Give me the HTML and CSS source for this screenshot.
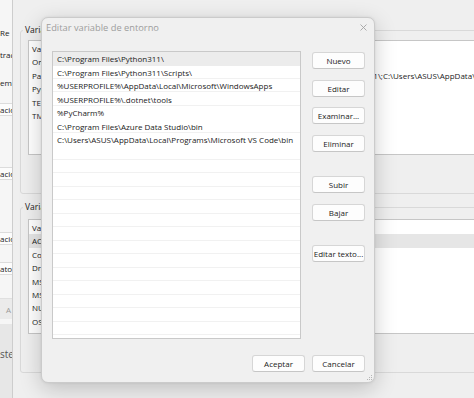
FILE: index.html
```html
<!DOCTYPE html>
<html lang="es">
<head>
  <meta charset="UTF-8" />
  <title>Editar variable de entorno</title>
  <link rel="stylesheet" href="styles.css">
</head>
<body>
  <div class="desktop">
    <!-- ventana de propiedades del sistema (casi tapada) -->
    <div class="win-sys">
      <p class="sys-text t-re">Re</p>
      <p class="sys-text t-trac">trac</p>
      <p class="sys-text t-em">em</p>
      <div class="sys-box b1">ació</div>
      <div class="sys-box b2">ació</div>
      <div class="sys-box b3">ació</div>
      <div class="sys-box b4">aton</div>
      <div class="sys-bar">A</div>
      <div class="sys-foot">ste</div>
    </div>

    <!-- variables de entorno -->
    <div class="win-env">
      <fieldset class="group">
        <legend>Variables de usuario para ASUS</legend>
        <div class="var-list">
          <div class="var-row"><span>Variable</span><span></span></div>
          <div class="var-row"><span>OneDrive</span><span></span></div>
          <div class="var-row"><span>Path</span><span class="path-val">C:\Program Files\Python311\Scripts\;C:\Program Files\Python311\;C:\Users\ASUS\AppData\Local\Microsoft\WindowsApps;</span></div>
          <div class="var-row"><span>PyCharm</span><span></span></div>
          <div class="var-row"><span>TEMP</span><span></span></div>
          <div class="var-row"><span>TMP</span><span></span></div>
        </div>
      </fieldset>

      <fieldset class="group group-sys">
        <legend>Variables del sistema</legend>
        <div class="var-list">
          <div class="var-row"><span>Variable</span><span></span></div>
          <div class="var-row selected"><span>ACSetupSvcPort</span><span></span></div>
          <div class="var-row"><span>ComSpec</span><span></span></div>
          <div class="var-row"><span>DriverData</span><span></span></div>
          <div class="var-row"><span>MSMPI_BIN</span><span></span></div>
          <div class="var-row"><span>MSMPI_INC</span><span></span></div>
          <div class="var-row"><span>NUMBER_OF_PROCESSORS</span><span></span></div>
          <div class="var-row"><span>OS</span><span></span></div>
          <div class="var-row"><span>Path</span><span></span></div>
        </div>
      </fieldset>
    </div>

    <!-- dialogo -->
    <div class="dialog">
      <div class="dialog-title">
        <span>Editar variable de entorno</span>
        <svg class="close" width="7" height="7" viewBox="0 0 7 7">
          <path d="M0.5 0.5L6.5 6.5M6.5 0.5L0.5 6.5" stroke="#a3a3a3" stroke-width="0.9" fill="none"/>
        </svg>
      </div>

      <div class="dialog-body">
        <div class="path-list">
          <div class="path-row selected">C:\Program Files\Python311\</div>
          <div class="path-row">C:\Program Files\Python311\Scripts\</div>
          <div class="path-row">%USERPROFILE%\AppData\Local\Microsoft\WindowsApps</div>
          <div class="path-row">%USERPROFILE%\.dotnet\tools</div>
          <div class="path-row">%PyCharm%</div>
          <div class="path-row">C:\Program Files\Azure Data Studio\bin</div>
          <div class="path-row">C:\Users\ASUS\AppData\Local\Programs\Microsoft VS Code\bin</div>
        </div>

        <div class="side-buttons">
          <button class="btn">Nuevo</button>
          <button class="btn">Editar</button>
          <button class="btn">Examinar...</button>
          <button class="btn">Eliminar</button>
          <button class="btn group-start">Subir</button>
          <button class="btn">Bajar</button>
          <button class="btn group-start">Editar texto...</button>
        </div>
      </div>

      <div class="dialog-footer">
        <button class="btn">Aceptar</button>
        <button class="btn">Cancelar</button>
      </div>

      <svg class="grip" width="7" height="7" viewBox="0 0 7 7">
        <rect x="5" y="1" width="1" height="1" fill="#b5b5b5"/>
        <rect x="3" y="3" width="1" height="1" fill="#b5b5b5"/>
        <rect x="5" y="3" width="1" height="1" fill="#b5b5b5"/>
        <rect x="1" y="5" width="1" height="1" fill="#b5b5b5"/>
        <rect x="3" y="5" width="1" height="1" fill="#b5b5b5"/>
        <rect x="5" y="5" width="1" height="1" fill="#b5b5b5"/>
      </svg>
    </div>
  </div>
</body>
</html>
```

FILE: styles.css
```css
* {
  box-sizing: border-box;
}
body {
  margin: 0;
  background: #f0f0f0;
  font-family: "Open Sans", "Noto Sans", sans-serif;
  font-size: 8px;
  color: #1b1b1b;
}
.desktop {
  position: relative;
  width: 474px;
  height: 398px;
  overflow: hidden;
}

/* ventana de atras, a la izquierda */
.win-sys {
  position: absolute;
  left: 0;
  top: 0;
  width: 12px;
  height: 398px;
  background: #f6f6f6;
  display: flex;
  flex-direction: column;
  overflow: hidden;
  white-space: nowrap;
  line-height: 12px;
  color: #222;
}
.sys-text {
  margin: 0;
}
.t-re { margin-top: 27px; }
.t-trac { margin-top: 10px; }
.t-em { margin-top: 16px; }
.sys-box {
  height: 13px;
  line-height: 11px;
  background: #fcfcfc;
  border-top: 1px solid #dcdcdc;
  border-bottom: 1px solid #dcdcdc;
}
.b1 { margin-top: 14px; }
.b2 { margin-top: 51px; }
.b3 { margin-top: 52px; }
.b4 { margin-top: 17px; }
.sys-bar {
  margin-top: 23px;
  height: 21px;
  line-height: 21px;
  background: #ebebeb;
  border-top: 1px solid #e0e0e0;
  color: #9a9a9a;
  text-align: right;
  padding-right: 1px;
}
.sys-foot {
  margin-top: 5px;
  flex-grow: 1;
  background: #e7e7e7;
  padding-top: 24px;
  font-size: 10px;
  color: #555;
}

/* ventana de variables de entorno */
.win-env {
  position: absolute;
  left: 12px;
  top: 0;
  width: 560px;
  height: 398px;
  background: #efefef;
  border-left: 1px solid #cdcdcd;
  padding: 24px 0 0 7px;
}
.group {
  margin: 0;
  padding: 4px 0 38px 2px;
  border: 1px solid #d9d9d9;
  border-radius: 3px;
}
.group-sys {
  margin-top: 7px;
  padding-top: 6px;
}
.group legend {
  padding: 0 2px;
  line-height: 12px;
  font-size: 8.5px;
  color: #222;
}
.var-list {
  margin-left: 5px;
  height: 115px;
  background: #fff;
  border: 1px solid #c6c6c6;
  padding-top: 1px;
  overflow: hidden;
}
.var-row {
  display: grid;
  grid-template-columns: 105px 1fr;
  height: 13.4px;
  line-height: 13.4px;
  padding-left: 3px;
  white-space: nowrap;
}
.var-row.selected {
  background: #e6e6e6;
}

/* dialogo editar variable */
.dialog {
  position: absolute;
  left: 41px;
  top: 17px;
  width: 334px;
  height: 366px;
  background: #f0f0f0;
  border: 1px solid #cbcbcb;
  border-radius: 7px;
  box-shadow: 0 6px 22px rgba(0, 0, 0, 0.2), 0 0 3px rgba(0, 0, 0, 0.08);
  display: flex;
  flex-direction: column;
}
.dialog-title {
  height: 19px;
  display: flex;
  align-items: center;
  justify-content: space-between;
  padding: 0 7px 0 4px;
  color: #9d9d9d;
  font-size: 9.3px;
}
.dialog-body {
  display: flex;
  gap: 11px;
  padding: 14px 9px 0 10px;
}
.path-list {
  width: 249px;
  height: 288px;
  background-color: #fff;
  background-image: repeating-linear-gradient(to bottom, transparent 0, transparent 12.5px, #f1f1f1 12.5px, #f1f1f1 13.5px);
  border: 1px solid #c9c9c9;
  overflow: hidden;
}
.path-row {
  height: 13.5px;
  line-height: 13px;
  padding-left: 4px;
  white-space: nowrap;
  color: #1a1a1a;
}
.path-row.selected {
  background: #ececec;
}
.side-buttons {
  width: 53px;
  margin-top: 1px;
  display: flex;
  flex-direction: column;
  gap: 10.7px;
}
.side-buttons .group-start {
  margin-top: 13.3px;
}
.btn {
  width: 53px;
  height: 17px;
  padding: 0;
  font-family: inherit;
  font-size: 8px;
  color: #1b1b1b;
  background: #fdfdfd;
  border: 1px solid #d6d6d6;
  border-bottom-color: #c6c6c6;
  border-radius: 3px;
  white-space: nowrap;
}
.dialog-footer {
  display: flex;
  justify-content: flex-end;
  gap: 7px;
  margin-top: 16px;
  padding-right: 9px;
}
.grip {
  position: absolute;
  right: 1px;
  bottom: 1px;
}
```
